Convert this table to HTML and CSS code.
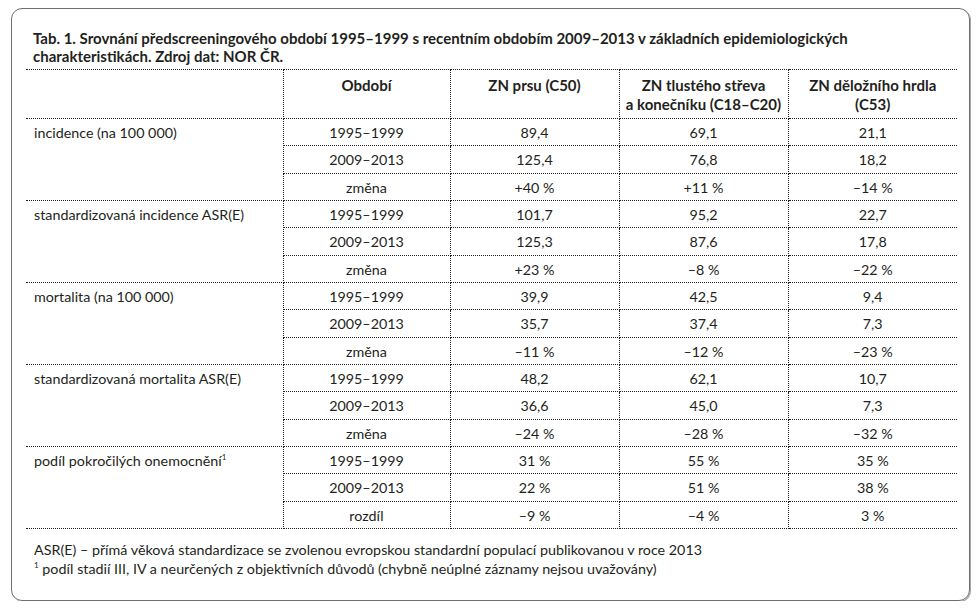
FILE: index.html
```html
<!DOCTYPE html>
<html lang="cs">
<head>
<meta charset="utf-8">
<title>Tab. 1</title>
<link rel="stylesheet" href="styles.css">
</head>
<body>
<div class="box">
  <h1 class="caption">Tab. 1. Srovnání předscreeningového období 1995–1999 s recentním obdobím 2009–2013 v základních epidemiologických charakteristikách. Zdroj dat: NOR ČR.</h1>
  <table class="data">
    <colgroup>
      <col class="c1"><col class="c2"><col class="c3"><col class="c4"><col class="c5">
    </colgroup>
    <thead>
      <tr class="head">
        <th></th>
        <th>Období</th>
        <th>ZN prsu (C50)</th>
        <th>ZN tlustého střeva<br>a konečníku (C18–C20)</th>
        <th>ZN děložního hrdla<br>(C53)</th>
      </tr>
    </thead>
    <tbody>
      <tr><td class="label" rowspan="3">incidence (na 100 000)</td><td>1995–1999</td><td>89,4</td><td>69,1</td><td>21,1</td></tr>
      <tr><td>2009–2013</td><td>125,4</td><td>76,8</td><td>18,2</td></tr>
      <tr><td>změna</td><td>+40 %</td><td>+11 %</td><td>–14 %</td></tr>

      <tr><td class="label" rowspan="3">standardizovaná incidence ASR(E)</td><td>1995–1999</td><td>101,7</td><td>95,2</td><td>22,7</td></tr>
      <tr><td>2009–2013</td><td>125,3</td><td>87,6</td><td>17,8</td></tr>
      <tr><td>změna</td><td>+23 %</td><td>–8 %</td><td>–22 %</td></tr>

      <tr><td class="label" rowspan="3">mortalita (na 100 000)</td><td>1995–1999</td><td>39,9</td><td>42,5</td><td>9,4</td></tr>
      <tr><td>2009–2013</td><td>35,7</td><td>37,4</td><td>7,3</td></tr>
      <tr><td>změna</td><td>–11 %</td><td>–12 %</td><td>–23 %</td></tr>

      <tr><td class="label" rowspan="3">standardizovaná mortalita ASR(E)</td><td>1995–1999</td><td>48,2</td><td>62,1</td><td>10,7</td></tr>
      <tr><td>2009–2013</td><td>36,6</td><td>45,0</td><td>7,3</td></tr>
      <tr><td>změna</td><td>–24 %</td><td>–28 %</td><td>–32 %</td></tr>

      <tr><td class="label" rowspan="3">podíl pokročilých onemocnění<sup>1</sup></td><td>1995–1999</td><td>31 %</td><td>55 %</td><td>35 %</td></tr>
      <tr><td>2009–2013</td><td>22 %</td><td>51 %</td><td>38 %</td></tr>
      <tr><td>rozdíl</td><td>–9 %</td><td>–4 %</td><td>3 %</td></tr>
    </tbody>
  </table>
  <div class="notes">
    <p>ASR(E) – přímá věková standardizace se zvolenou evropskou standardní populací publikovanou v roce 2013</p>
    <p><sup>1</sup> podíl stadií III, IV a neurčených z objektivních důvodů (chybně neúplné záznamy nejsou uvažovány)</p>
  </div>
</div>
</body>
</html>
```

FILE: styles.css
```css
html, body {
  margin: 0;
  padding: 0;
  background: #ffffff;
}

body {
  font-family: Lato, "Open Sans", "Liberation Sans", sans-serif;
  color: #231f20;
}

.box {
  box-sizing: border-box;
  width: 959px;
  height: 593px;
  margin: 8px 0 0 11px;
  border: 1px solid #6f6f6f;
  border-radius: 11px;
  box-shadow: 1px 1px 0 #a8a8a8;
  padding: 20px 12px 0 14px;
}

.caption {
  margin: 0 0 4px 7px;
  font-size: 15px;
  font-weight: 700;
  line-height: 18px;
}

.data {
  border-collapse: collapse;
  table-layout: fixed;
  width: 931px;
  font-size: 14.3px;
  line-height: 19px;
}

.c1 { width: 257px; }
.c2 { width: 167px; }
.c3, .c4, .c5 { width: 169px; }

.data th,
.data td {
  border: 1px dotted #231f20;
  padding: 4px 8px 0;
  vertical-align: top;
  text-align: center;
  font-weight: 400;
  white-space: nowrap;
}

.data th:first-child,
.data td.label { border-left: none; }
.data th:last-child,
.data td:last-child { border-right: none; }

.data .head th {
  font-weight: 700;
  font-size: 15px;
  height: 49px;
  padding: 6px 2px 0;
  box-sizing: border-box;
}

.data tbody tr {
  height: 27.33px;
}

.data td.label {
  text-align: left;
}

sup {
  font-size: 8px;
  line-height: 0;
  vertical-align: 6px;
}

.notes {
  margin: 11px 0 0 8px;
  font-size: 14.3px;
  line-height: 19px;
}

.notes p {
  margin: 0;
}
```
